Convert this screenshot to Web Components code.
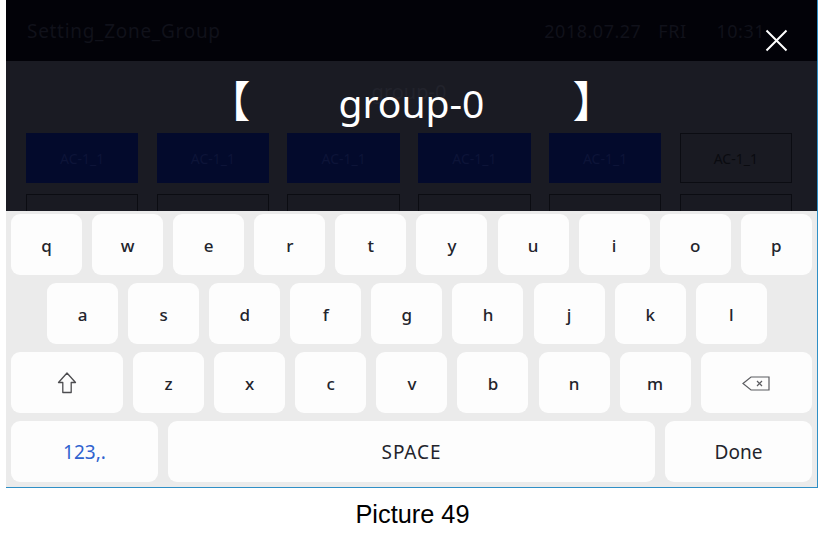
<!DOCTYPE html>
<html lang="en">
<head>
<meta charset="utf-8">
<title>Picture 49</title>
<style>
    html, body{
        margin: 0;
        background: #fff;
    }
</style>
</head>
<body>
<keyboard-page>
    <span slot="caption">Picture 49</span>
</keyboard-page>
<script>
const UI_FONT = `"Noto Sans", "Liberation Sans", sans-serif`;

class KbKey extends HTMLElement
{
    constructor()
    {
        super();
        this.attachShadow({mode: "open"});
    }

    connectedCallback()
    {
        this.shadowRoot.innerHTML = `
        <style>
            :host{
                align-items: center;
                background: #fdfdfd;
                border-radius: 9px;
                color: #23242c;
                display: flex;
                flex: 0 0 71px;
                font: 500 17px ${UI_FONT};
                height: 61px;
                justify-content: center;
                padding-top: 1px;
                box-sizing: border-box;
            }
            :host([grow]){
                flex: 1 1 0;
            }
            :host([wide]){
                flex: 0 0 112px;
            }
            :host([action]){
                flex: 0 0 147px;
                font-size: 19px;
                font-weight: 400;
            }
            :host([spaced]){
                font-size: 19px;
                font-weight: 400;
                letter-spacing: .9px;
            }
            :host([blue]){
                color: #2f62cf;
            }
        </style>
        <slot></slot>
        `;
    }
}
customElements.define("kb-key", KbKey);

class KbRow extends HTMLElement
{
    constructor()
    {
        super();
        this.attachShadow({mode: "open"});
        this.shadowRoot.innerHTML = `
        <style>
            :host{
                display: flex;
                gap: 10.1px;
            }
            :host([indent]){
                padding-left: 36px;
            }
        </style>
        <slot></slot>
        `;
    }
}
customElements.define("kb-row", KbRow);

class TextKeyboard extends HTMLElement
{
    constructor()
    {
        super();
        this.attachShadow({mode: "open"});
    }

    keys(letters)
    {
        return letters.split("").map(letter => `<kb-key>${letter}</kb-key>`).join("");
    }

    connectedCallback()
    {
        this.shadowRoot.innerHTML = `
        <style>
            :host{
                background: #ebebeb;
                box-sizing: border-box;
                display: flex;
                flex-direction: column;
                gap: 8px;
                height: 276px;
                padding: 3px 5px 5px;
            }
        </style>
        <kb-row>${this.keys("qwertyuiop")}</kb-row>
        <kb-row indent>${this.keys("asdfghjkl")}</kb-row>
        <kb-row>
            <kb-key wide>
                <svg width="20" height="22" viewBox="0 0 20 22" fill="none" stroke="#4d4d50" stroke-width="1.3" stroke-linejoin="round">
                    <path d="M10 1 L18.5 10.5 H14.2 V20.5 H5.8 V10.5 H1.5 Z"/>
                </svg>
            </kb-key>
            ${this.keys("zxcvbnm")}
            <kb-key grow>
                <svg width="28" height="15" viewBox="0 0 28 15" fill="none" stroke="#5b5c60" stroke-width="1.2">
                    <path d="M1 7.5 L9 1 H27 V14 H9 Z"/>
                    <path d="M15 5 L20 10 M20 5 L15 10"/>
                </svg>
            </kb-key>
        </kb-row>
        <kb-row>
            <kb-key action blue>123,.</kb-key>
            <kb-key grow spaced>SPACE</kb-key>
            <kb-key action>Done</kb-key>
        </kb-row>
        `;
    }
}
customElements.define("text-keyboard", TextKeyboard);

class ZoneCell extends HTMLElement
{
    constructor()
    {
        super();
        this.attachShadow({mode: "open"});
        this.shadowRoot.innerHTML = `
        <style>
            :host{
                align-items: center;
                background: #030a2c;
                box-sizing: border-box;
                color: #0d1438;
                display: flex;
                font: 14px ${UI_FONT};
                height: 50px;
                justify-content: center;
            }
            :host([off]){
                background: #191a22;
                border: 1px solid #0b0c12;
                color: #0a0b10;
            }
        </style>
        <slot></slot>
        `;
    }
}
customElements.define("zone-cell", ZoneCell);

class ZonePanel extends HTMLElement
{
    constructor()
    {
        super();
        this.attachShadow({mode: "open"});
    }

    connectedCallback()
    {
        const labels = ["AC-1_1", "AC-1_1", "AC-1_1", "AC-1_1", "AC-1_1"];
        this.shadowRoot.innerHTML = `
        <style>
            :host{
                display: block;
            }
            header{
                align-items: center;
                background: #020208;
                box-sizing: border-box;
                color: #10111a;
                display: flex;
                font: 19px ${UI_FONT};
                height: 61px;
                justify-content: space-between;
                letter-spacing: .7px;
                padding: 0 52px 0 21px;
            }
            .clock{
                display: flex;
                font-size: 18px;
                gap: 30px;
                letter-spacing: .5px;
            }
            .date{
                margin-right: -13px;
            }
            main{
                background: #1a1b23;
                box-sizing: border-box;
                height: 150px;
                overflow: hidden;
                padding: 0 25px 0 20px;
            }
            .name{
                color: #22232c;
                font: 20px/62px ${UI_FONT};
                height: 72px;
                text-align: center;
            }
            .cells{
                display: grid;
                gap: 11px 18.4px;
                grid-template-columns: repeat(6, 1fr);
            }
        </style>
        <header>
            <span>Setting_Zone_Group</span>
            <span class="clock"><span class="date">2018.07.27</span><span>FRI</span><span>10:31</span></span>
        </header>
        <main>
            <div class="name">group-0</div>
            <div class="cells">
                ${labels.map(label => `<zone-cell>${label}</zone-cell>`).join("")}
                <zone-cell off>AC-1_1</zone-cell>
                ${`<zone-cell off></zone-cell>`.repeat(6)}
            </div>
        </main>
        `;
    }
}
customElements.define("zone-panel", ZonePanel);

class NameInput extends HTMLElement
{
    constructor()
    {
        super();
        this.attachShadow({mode: "open"});
        this.shadowRoot.innerHTML = `
        <style>
            :host{
                align-items: center;
                color: #fff;
                display: flex;
                font: 39px "Noto Sans", "Noto Sans CJK SC", sans-serif;
                justify-content: center;
                left: 0;
                position: absolute;
                right: 0;
                top: 76px;
                height: 52px;
            }
            .bracket{
                font-family: "Noto Sans CJK SC", sans-serif;
                font-size: 43px;
                font-weight: 400;
                line-height: 52px;
                padding-bottom: 7px;
                text-align: center;
                width: 43px;
            }
            .value{
                text-align: center;
                width: 322px;
            }
        </style>
        <span class="bracket">【</span>
        <span class="value">group-0</span>
        <span class="bracket">】</span>
        `;
    }
}
customElements.define("name-input", NameInput);

class CloseButton extends HTMLElement
{
    constructor()
    {
        super();
        this.attachShadow({mode: "open"});
        this.shadowRoot.innerHTML = `
        <style>
            :host{
                display: block;
                height: 23px;
                position: absolute;
                right: 29px;
                top: 29px;
                width: 23px;
            }
        </style>
        <svg width="23" height="23" viewBox="0 0 23 23" stroke="#fff" stroke-width="2" fill="none">
            <path d="M1.5 1.5 L21.5 21.5 M21.5 1.5 L1.5 21.5"/>
        </svg>
        `;
    }
}
customElements.define("close-button", CloseButton);

class KeyboardPage extends HTMLElement
{
    constructor()
    {
        super();
        this.attachShadow({mode: "open"});
        this.shadowRoot.innerHTML = `
        <style>
            :host{
                display: block;
            }
            .screen{
                border-bottom: 1px solid #2f8fc6;
                border-right: 1px solid #2f8fc6;
                margin-left: 6px;
                position: relative;
                width: 811px;
            }
            .caption{
                color: #000;
                font: 25.33px "Liberation Sans", Arial, sans-serif;
                margin-top: 12px;
                text-align: center;
            }
        </style>
        <div class="screen">
            <zone-panel></zone-panel>
            <text-keyboard></text-keyboard>
            <name-input></name-input>
            <close-button></close-button>
        </div>
        <div class="caption"><slot name="caption"></slot></div>
        `;
    }
}
customElements.define("keyboard-page", KeyboardPage);
</script>
</body>
</html>
